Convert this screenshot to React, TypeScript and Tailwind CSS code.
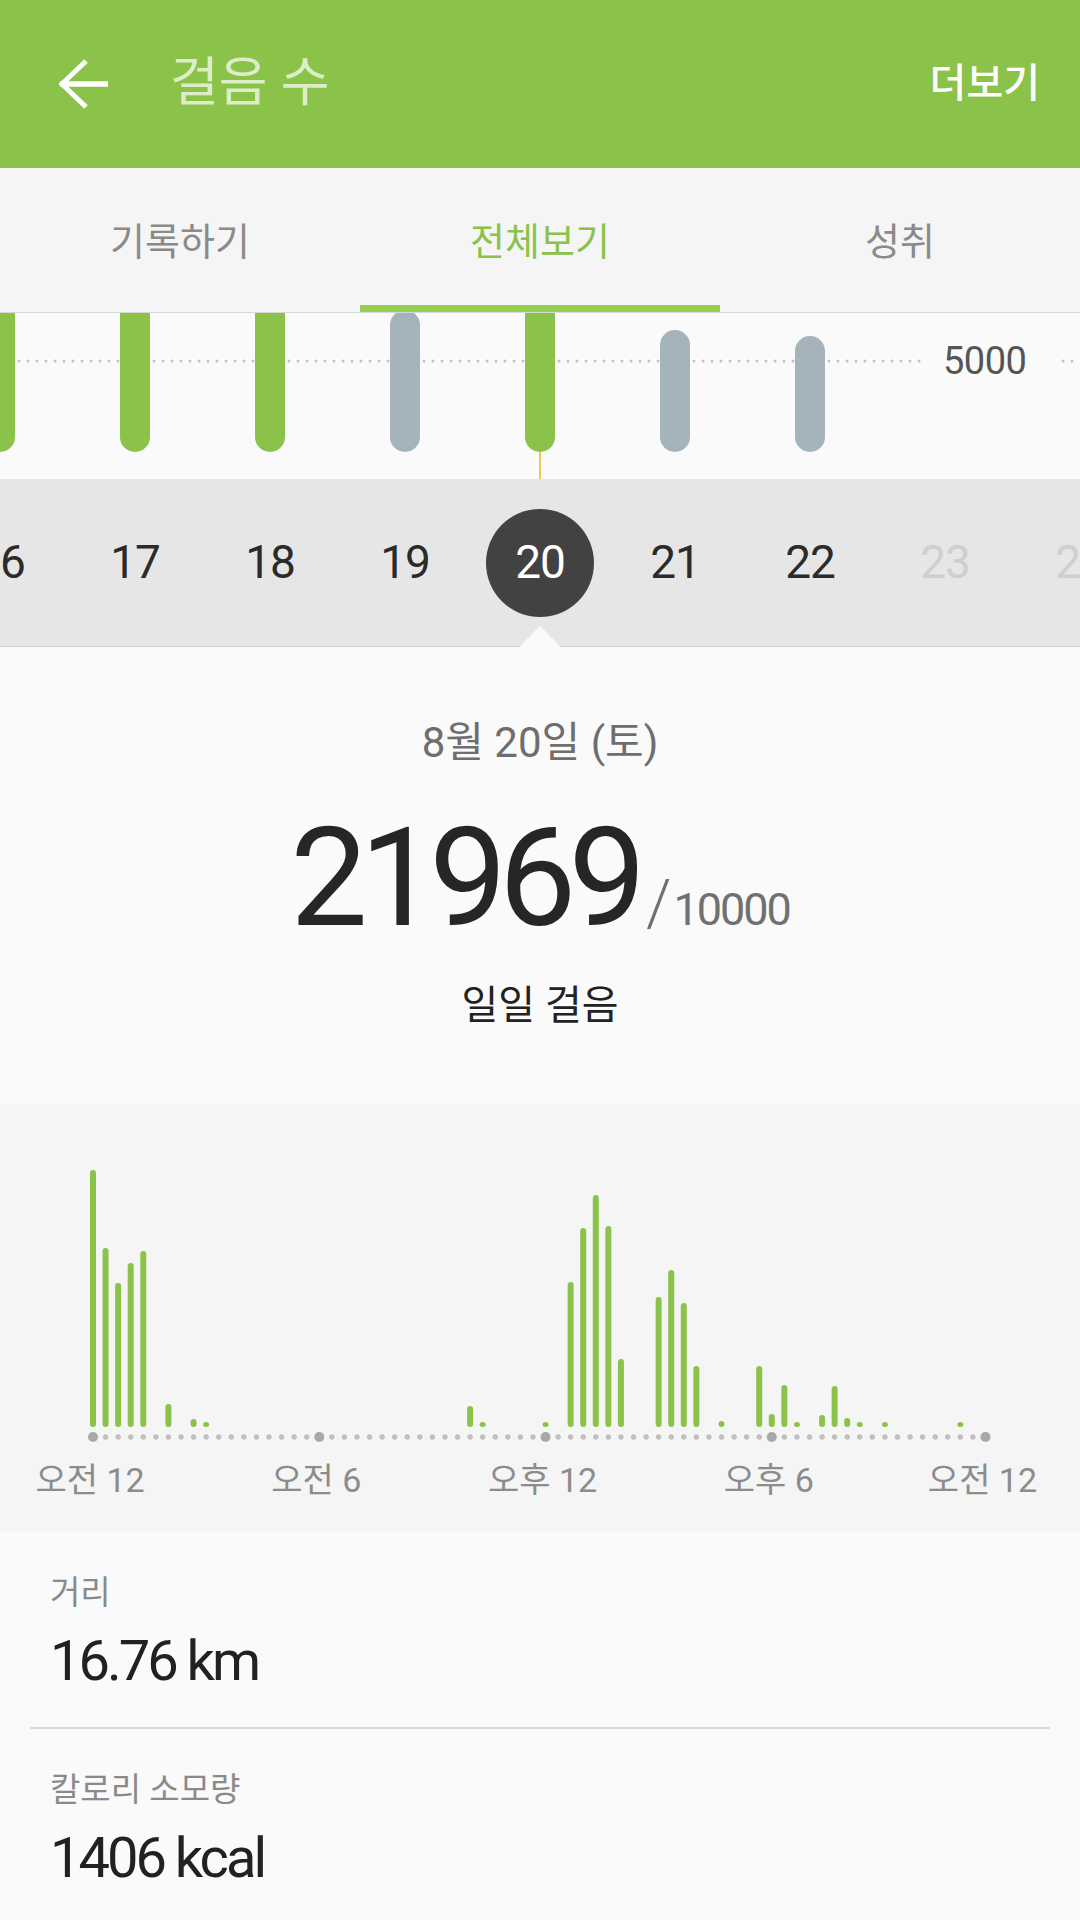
import React from 'react';

const FONT = { fontFamily: 'Roboto, "Noto Sans CJK KR", sans-serif' };

// hourly bars: [slot index, top y in page coords]
const hourly: [number, number][] = [
  [0, 1171], [1, 1249], [2, 1284], [3, 1264], [4, 1252], [6, 1405], [8, 1420], [9, 1423],
  [30, 1407], [31, 1423], [36, 1423], [38, 1283], [39, 1229], [40, 1196], [41, 1227],
  [42, 1360], [45, 1298], [46, 1271], [47, 1304], [48, 1367], [50, 1422], [53, 1367],
  [54, 1415], [55, 1386], [56, 1423], [58, 1416], [59, 1387], [60, 1419], [61, 1423],
  [63, 1423], [69, 1423],
];

const weekBars = [
  { x: 0, top: -30, gray: false },
  { x: 135, top: -30, gray: false },
  { x: 270, top: -30, gray: false },
  { x: 405, top: -3, gray: true },
  { x: 540, top: -30, gray: false },
  { x: 675, top: 17, gray: true },
  { x: 810, top: 23, gray: true },
];

const days = [16, 17, 18, 19, 20, 21, 22, 23, 24];

function WeekChart() {
  const dots: number[] = [];
  for (let x = 19; x < 1080; x += 9) {
    if (x > 922 && x < 1055) continue;
    dots.push(x);
  }
  return (
    <div className="relative h-[166px] bg-[#fafafa] overflow-hidden">
      <svg width="1080" height="166" className="block">
        {dots.map((x) => (
          <circle key={x} cx={x} cy={48} r={1.5} fill="#c2c2c2" />
        ))}
        {weekBars.map((b) => (
          <rect
            key={b.x}
            x={b.x - 15}
            y={b.top}
            width={30}
            height={139 - b.top}
            rx={15}
            fill={b.gray ? '#a5b3ba' : '#8bc34a'}
          />
        ))}
        <line x1={540} y1={139} x2={540} y2={166} stroke="#f0b418" strokeWidth={1.5} />
      </svg>
      <span
        className="absolute left-[943px] top-[25px] text-[38px] leading-[46px] tracking-[-0.5px] text-[#555555]"
        style={FONT}
      >
        5000
      </span>
    </div>
  );
}

function DayStrip() {
  return (
    <div className="relative h-[168px] bg-[#e6e6e6] border-b border-[#d0d0d0]">
      <div className="flex h-full items-center ml-[-67.5px]">
        {days.map((d) => (
          <div key={d} className="w-[135px] shrink-0 flex justify-center">
            {d === 20 ? (
              <div className="w-[108px] h-[108px] rounded-full bg-[#424242] flex items-center justify-center text-white text-[46px] tracking-[-1px]">
                {d}
              </div>
            ) : (
              <span
                className={`text-[46px] tracking-[-1px] ${d > 22 ? 'text-[#cfcfcf]' : 'text-[#2b2b2b]'}`}
              >
                {d}
              </span>
            )}
          </div>
        ))}
      </div>
      <svg width="42" height="21" className="absolute left-[519px] bottom-[-1px]">
        <polygon points="0,21 21,0 42,21" fill="#fafafa" />
      </svg>
    </div>
  );
}

function HourChart() {
  const slot = (i: number) => 93 + i * 12.57;
  const dots = Array.from({ length: 72 }, (_, i) => i);
  const big = [0, 18, 36, 54, 71];
  const labels = ['오전 12', '오전 6', '오후 12', '오후 6', '오전 12'];
  return (
    <div className="h-[428px] bg-[#f5f5f5]">
      <svg width="1080" height="428" className="block">
        {hourly.map(([i, top]) => {
          const y = top - 1105;
          const h = 323 - y;
          return <rect key={i} x={slot(i) - 3} y={y} width={6} height={h} rx={3} fill="#8bc34a" />;
        })}
        {dots.map((i) =>
          big.includes(i) ? (
            <circle key={i} cx={slot(i)} cy={333} r={5} fill="#a8a8a8" />
          ) : (
            <circle key={i} cx={slot(i)} cy={333} r={2.7} fill="#c0c0c0" />
          )
        )}
        {big.map((i, k) => (
          <text
            key={i}
            x={slot(i) - 3}
            y={388}
            textAnchor="middle"
            fontSize={34}
            fill="#8c8c8c"
            fontFamily='Roboto, "Noto Sans CJK KR", sans-serif'
          >
            {labels[k]}
          </text>
        ))}
      </svg>
    </div>
  );
}

function StatRow({ label, value, unit }: { label: string; value: string; unit: string }) {
  return (
    <div className="mx-[30px] border-b-2 border-[#d8d8d8] pt-[41px] pb-[36px] px-[20px]">
      <div className="text-[33px] leading-[40px] text-[#8a8a8a]">{label}</div>
      <div className="mt-[18px] text-[56px] leading-[60px] tracking-[-3px] text-[#212121]">
        {value} {unit}
      </div>
    </div>
  );
}

export default function App() {
  return (
    <div className="w-[1080px] h-[1920px] overflow-hidden bg-[#fafafa]" style={FONT}>
      {/* app bar */}
      <header className="h-[168px] bg-[#8bc34a] flex items-center pl-[56px] pr-[40px]">
        <svg width="56" height="52" viewBox="0 0 56 52" className="shrink-0">
          <path d="M4 26 H52" stroke="white" strokeWidth={5.5} fill="none" />
          <path d="M30 3 L6 26 L30 49" stroke="white" strokeWidth={5} fill="none" />
        </svg>
        <h1 className="ml-[58px] text-[53px] text-[#dcedc8]">걸음 수</h1>
        <span className="ml-auto text-[40px] font-medium text-white">더보기</span>
      </header>

      {/* tabs */}
      <nav className="h-[145px] bg-[#f5f5f5] grid grid-cols-3 border-b border-[#d6d6d6]">
        <div className="flex items-center justify-center pt-[4px] text-[38px] text-[#8a8a8a]">기록하기</div>
        <div className="relative flex items-center justify-center pt-[4px] text-[38px] text-[#8bc34a]">
          전체보기
          <div className="absolute left-0 right-0 bottom-0 h-[7px] bg-[#95cf4f]" />
        </div>
        <div className="flex items-center justify-center pt-[4px] text-[38px] text-[#8a8a8a]">성취</div>
      </nav>

      <WeekChart />
      <DayStrip />

      {/* daily summary */}
      <section className="h-[457px] flex flex-col items-center">
        <div className="mt-[66px] h-[60px] leading-[60px] text-[42px] text-[#6e6e6e]">8월 20일 (토)</div>
        <div className="mt-[30px] flex items-baseline h-[150px] leading-[150px]">
          <span className="text-[138px] tracking-[-8px] text-[#262626]">21969</span>
          <span className="ml-[8px] text-[64px] font-light text-[#707070]">/</span>
          <span className="ml-[2px] text-[45px] tracking-[-2px] text-[#707070]">10000</span>
        </div>
        <div className="mt-[28px] h-[50px] leading-[50px] text-[40px] text-[#222222]">일일 걸음</div>
      </section>

      <HourChart />

      <StatRow label="거리" value="16.76" unit="km" />
      <StatRow label="칼로리 소모량" value="1406" unit="kcal" />
    </div>
  );
}
